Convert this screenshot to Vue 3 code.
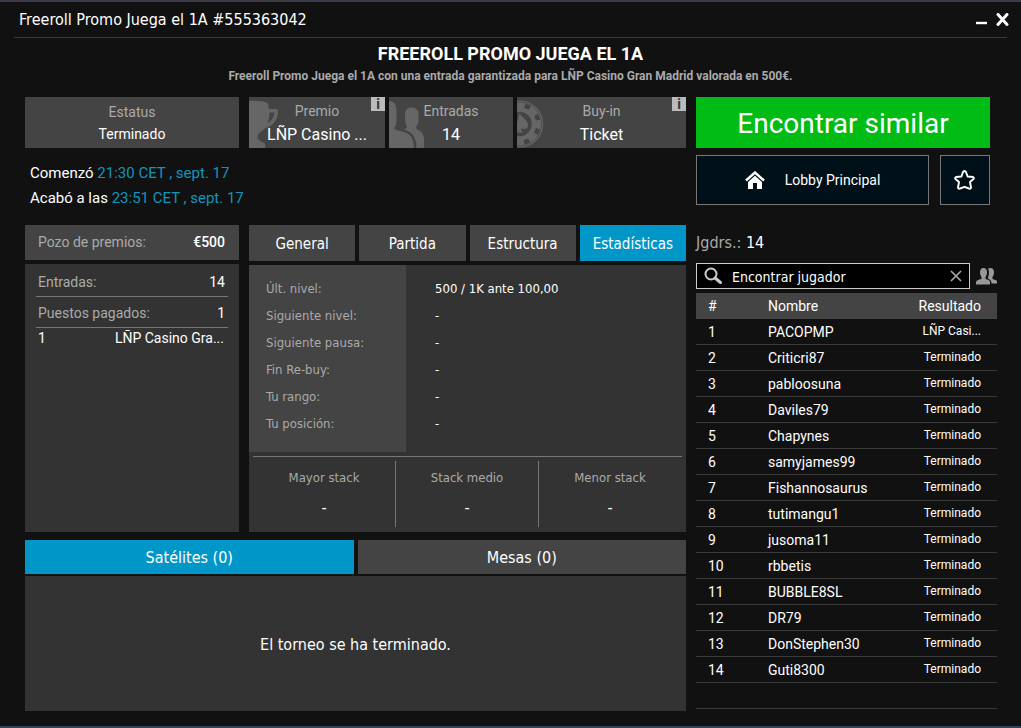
<script setup>
import { ref } from 'vue'

const tabs = ['General', 'Partida', 'Estructura', 'Estadísticas']
const activeTab = ref('Estadísticas')
const lowerTabs = ['Satélites (0)', 'Mesas (0)']
const activeLower = ref('Satélites (0)')
const search = ref('')

const levels = [
  ['Últ. nivel:', '500 / 1K ante 100,00'],
  ['Siguiente nivel:', '-'],
  ['Siguiente pausa:', '-'],
  ['Fin Re-buy:', '-'],
  ['Tu rango:', '-'],
  ['Tu posición:', '-'],
]
const stacks = ['Mayor stack', 'Stack medio', 'Menor stack']
const players = [
  'PACOPMP', 'Criticri87', 'pabloosuna', 'Daviles79', 'Chapynes', 'samyjames99', 'Fishannosaurus',
  'tutimangu1', 'jusoma11', 'rbbetis', 'BUBBLE8SL', 'DR79', 'DonStephen30', 'Guti8300',
].map((name, i) => ({ name, result: i === 0 ? 'LÑP Casi...' : 'Terminado' }))
</script>

<template>
  <div class="window">
    <header class="titlebar">
      <span class="title">Freeroll Promo Juega el 1A #555363042</span>
      <div class="controls">
        <button type="button" aria-label="Minimizar">
          <svg width="12" height="14" viewBox="0 0 12 14"><path d="M0 10h11" stroke="#fff" stroke-width="2.400" /></svg>
        </button>
        <button type="button" aria-label="Cerrar">
          <svg width="14" height="14" viewBox="0 0 14 14"><path d="M2 1.500l9 10M11 1.500L2 11.500" stroke="#fff" stroke-width="3" stroke-linecap="round" /></svg>
        </button>
      </div>
    </header>

    <div class="heading">
      <h1>FREEROLL PROMO JUEGA EL 1A</h1>
      <p>Freeroll Promo Juega el 1A con una entrada garantizada para LÑP Casino Gran Madrid valorada en 500€.</p>
    </div>

    <main class="body">
      <div class="left">
        <div class="split">
          <div class="tile status">
            <span class="label">Estatus</span>
            <span class="value">Terminado</span>
          </div>
          <div class="tiles">
            <div class="tile prize">
              <svg class="art" width="32" height="51" viewBox="0 0 32 51" fill="#666">
                <path d="M0 4C8 3.500 15 4 19 6.500L20 12H27.500Q29.500 12.500 29 16C28 23 24 29 17 31C14 33 9 36 8.500 39C8 42 10 44 15 46Q17 47 16 49V51H0ZM20.500 15.500C20.500 19 20 22 18.500 26C22 24.500 25 20.500 25.500 15.500Z" fill-rule="evenodd" />
              </svg>
              <span class="label">Premio</span>
              <span class="value">LÑP Casino ...</span>
              <button type="button" class="info" aria-label="Información del premio">i</button>
            </div>
            <div class="tile entries">
              <svg class="art" width="36" height="51" viewBox="0 0 36 51" fill="#666">
                <path d="M0 4Q4 4 6 7Q7.500 10 7.500 16V24Q7.500 29 5 31Q6 33 11 34Q18 35 21.500 39Q25 43 25 51H0Z" />
                <path d="M22.500 10.500C27 10.500 29.500 13 29.500 18V23Q29.500 28 27 30Q27 32 29 33Q34 35 35 41V51H27.500Q27.500 42 23 37Q20 33.500 14.500 32.500Q18 31.500 18 29.500Q16 27 16 23V18C16 13 18 10.500 22.500 10.500Z" />
              </svg>
              <span class="label">Entradas</span>
              <span class="value">14</span>
            </div>
            <div class="tile buyin">
              <svg class="art" width="28" height="51" viewBox="0 0 28 51" fill="none">
                <circle cx="2.500" cy="27" r="23" stroke="#666" stroke-width="1.200" />
                <circle cx="2.500" cy="27" r="17" stroke="#666" stroke-width="9.500" />
                <circle cx="2.500" cy="27" r="19" stroke="#444" stroke-width="4.500" stroke-dasharray="5.500 9.422" stroke-dashoffset="-4.700" />
                <path d="M2.500 16C4 20 11 23 11 28Q11 32 7 32Q5 32 4 30.500Q4 34 6 35.500H-1V30Z" fill="#666" />
              </svg>
              <span class="label">Buy-in</span>
              <span class="value">Ticket</span>
              <button type="button" class="info" aria-label="Información del buy-in">i</button>
            </div>
          </div>
        </div>

        <div class="dates">
          <p>Comenzó <time>21:30 CET , sept. 17</time></p>
          <p>Acabó a las <time>23:51 CET , sept. 17</time></p>
        </div>

        <div class="split details">
          <section class="pool">
            <div class="pool-head"><span>Pozo de premios:</span><b>€500</b></div>
            <div class="pool-body">
              <div class="line"><span>Entradas:</span><b>14</b></div>
              <div class="line"><span>Puestos pagados:</span><b>1</b></div>
              <div class="payout"><b>1</b><b>LÑP Casino Gra...</b></div>
            </div>
          </section>

          <section class="stats">
            <nav class="tabs">
              <button v-for="t in tabs" :key="t" type="button" :class="{ active: t === activeTab }" @click="activeTab = t">{{ t }}</button>
            </nav>
            <div class="panel">
              <table class="levels">
                <tbody>
                  <tr v-for="[k, v] in levels" :key="k"><th scope="row">{{ k }}</th><td>{{ v }}</td></tr>
                </tbody>
              </table>
              <dl class="stacks">
                <div v-for="s in stacks" :key="s"><dt>{{ s }}</dt><dd>-</dd></div>
              </dl>
            </div>
          </section>
        </div>

        <section class="lower">
          <nav class="tabs">
            <button v-for="t in lowerTabs" :key="t" type="button" :class="{ active: t === activeLower }" @click="activeLower = t">{{ t }}</button>
          </nav>
          <div class="message">El torneo se ha terminado.</div>
        </section>
      </div>

      <aside class="right">
        <button type="button" class="similar">Encontrar similar</button>
        <div class="actions">
          <button type="button" class="lobby">
            <svg width="20" height="18" viewBox="0 0 20 18">
              <path d="M1 9.500L10 1.500L19 9.500" fill="none" stroke="#fff" stroke-width="2.400" />
              <path d="M10 4.800L17 11V18H12V12H8V18H3V11Z" fill="#fff" />
            </svg>
            <span>Lobby Principal</span>
          </button>
          <button type="button" class="fav" aria-label="Favorito">
            <svg width="22" height="22" viewBox="0 0 22 22">
              <path d="M10.500 2Q11.500 2 12 3L13.600 7.500L19 8Q20.500 9 19.500 10L16 13L17 18.500Q16.500 20.500 15 19.500L10.500 17.800L6 19.500Q4.500 20.500 4 18.500L5 13L1.500 10Q.5 9 2 8L7.400 7.500L9 3Q9.500 2 10.500 2Z" fill="none" stroke="#fff" stroke-width="1.900" stroke-linejoin="round" />
            </svg>
          </button>
        </div>

        <p class="count">Jgdrs.: <b>14</b></p>

        <div class="search-row">
          <div class="search">
            <svg width="20" height="18" viewBox="0 0 20 18" fill="none">
              <circle cx="7" cy="7" r="5.500" stroke="#ccc" stroke-width="2" />
              <path d="M11 11L16.500 15.500" stroke="#ccc" stroke-width="3" stroke-linecap="round" />
            </svg>
            <input v-model="search" type="text" aria-label="Encontrar jugador" placeholder="Encontrar jugador">
            <button type="button" aria-label="Borrar" @click="search = ''">
              <svg width="12" height="12" viewBox="0 0 12 12"><path d="M1 1l10 10M11 1L1 11" stroke="#aaa" stroke-width="1.600" /></svg>
            </button>
          </div>
          <button type="button" class="friends" aria-label="Amigos">
            <svg width="21" height="17" viewBox="0 0 21 17" fill="#999">
              <path d="M7.500 0Q11 0 11 4.500Q11 7.500 9.500 9V11Q14 12 14 14V16.500H0V14Q.5 12 5.500 11V9Q4 7.500 4 4.500Q4 0 7.500 0Z" />
              <path d="M12 .8Q13 0 14.500 0Q18 0 18 4.500Q18 7.500 16.500 9V11Q20 12 21 13V15.500H15.500Q15.500 12 12 10.500V9.500Q13 7.500 13 4.500Q13 2.500 12 .8Z" />
            </svg>
          </button>
        </div>

        <table class="players">
          <thead>
            <tr><th scope="col">#</th><th scope="col">Nombre</th><th scope="col">Resultado</th></tr>
          </thead>
          <tbody>
            <tr v-for="(p, i) in players" :key="p.name"><td>{{ i + 1 }}</td><td>{{ p.name }}</td><td>{{ p.result }}</td></tr>
            <tr><td></td><td></td><td></td></tr>
          </tbody>
        </table>
      </aside>
    </main>
  </div>
</template>

<style>
body {
  background: #111;
}
</style>

<style scoped>
* {
  box-sizing: border-box;
}
.window {
  min-height: 100vh;
  display: flex;
  flex-direction: column;
  border-top: 2px solid #3a3a48;
  border-bottom: 2px solid #35405a;
  background: #111;
  color: #fff;
  font: 14px/20px Roboto, sans-serif;
}
h1, p, dl, dd {
  margin: 0;
}
b {
  font-weight: 400;
}
button {
  margin: 0;
  padding: 0;
  border: 0;
  background: none;
  color: inherit;
  font: inherit;
  cursor: pointer;
}
svg {
  display: block;
}
.titlebar {
  display: flex;
  justify-content: space-between;
  align-items: center;
  height: 36px;
  margin: 0 14px;
  padding-left: 5px;
  border-bottom: 1px solid #3a3a3a;
}
.title {
  font: 16px/20px "DejaVu Sans Condensed", "DejaVu Sans", sans-serif;
}
.controls {
  display: flex;
  gap: 8px;
  margin-right: -3px;
}
.heading {
  height: 59px;
  padding-top: 5px;
  text-align: center;
}
.heading h1 {
  font-size: 18px;
  line-height: 22px;
  font-weight: 700;
}
.heading p {
  font-size: 12px;
  line-height: 22px;
  font-weight: 700;
  color: #aaa;
}
.body {
  display: grid;
  grid-template-columns: minmax(0, 1fr) 301px;
  gap: 10px;
  padding: 0 24px 15px 25px;
}
.split {
  display: grid;
  grid-template-columns: 214px minmax(0, 1fr);
  gap: 10px;
}
.tiles {
  display: grid;
  grid-template-columns: 136fr 124fr 169fr;
  gap: 4px;
}
.tile {
  position: relative;
  display: flex;
  flex-direction: column;
  align-items: center;
  height: 51px;
  padding-top: 2px;
  background: #444;
}
.tile.status {
  padding-top: 4px;
}
.tile span {
  position: relative;
  line-height: 24px;
}
.tile.status span {
  line-height: 22px;
}
.label {
  color: #aaa;
}
.value {
  font-size: 16px;
}
.status .value {
  font-size: 14px;
}
.art {
  position: absolute;
  left: 0;
  top: 0;
}
.info {
  position: absolute;
  top: 0;
  right: 0;
  width: 14px;
  height: 14px;
  background: #bbb;
  color: #333;
  font-size: 14px;
  line-height: 14px;
  font-weight: 700;
}
.dates {
  padding: 13px 5px 14px;
  font-size: 15px;
  line-height: 25px;
}
.dates time {
  color: #1295bd;
}
.pool {
  display: flex;
  flex-direction: column;
  gap: 4px;
}
.pool span {
  color: #aaa;
}
.pool-head {
  display: flex;
  justify-content: space-between;
  padding: 0 14px 0 13px;
  line-height: 35px;
  background: #444;
}
.pool-head b {
  font-weight: 500;
}
.pool-body {
  flex: 1;
  padding: 2px 11px;
  background: #333;
}
.line, .payout {
  display: flex;
  justify-content: space-between;
  padding: 0 3px 0 2px;
}
.line {
  padding-top: 2px;
  line-height: 28px;
  border-bottom: 1px solid #777;
}
.payout {
  padding-right: 4px;
  line-height: 20px;
}
.tabs {
  display: grid;
  grid-auto-flow: column;
  grid-auto-columns: minmax(0, 1fr);
  gap: 4px;
}
.tabs button {
  padding-top: 2px;
  background: #444;
  font: 15px/34px "DejaVu Sans Condensed", "DejaVu Sans", sans-serif;
}
.tabs .active {
  background: #0097c8;
}
.panel {
  margin-top: 4px;
  background: #333;
  font: 13px/27px "DejaVu Sans Condensed", "DejaVu Sans", sans-serif;
}
.levels {
  width: 100%;
  border-collapse: collapse;
}
.levels th {
  width: 157px;
  padding: 0 0 0 17px;
  background: #444;
  color: #aaa;
  font-weight: 400;
  text-align: left;
}
.levels td {
  padding: 0 0 0 29px;
}
.levels tr:first-child > * {
  padding-top: 10px;
}
.levels tr:last-child > * {
  padding-bottom: 15px;
}
.stacks {
  display: grid;
  grid-template-columns: repeat(3, minmax(0, 1fr));
  margin: 4px 4px 0;
  padding: 4px 0 5px;
  border-top: 1px solid #777;
  text-align: center;
}
.stacks div {
  height: 66px;
  padding-top: 3px;
  border-right: 1px solid #777;
}
.stacks div:last-child {
  border-right-color: transparent;
}
.stacks dt {
  color: #aaa;
}
.stacks dd {
  font-size: 16px;
  line-height: 34px;
}
.lower {
  margin-top: 8px;
}
.lower .tabs button {
  font-size: 16px;
  line-height: 32px;
}
.message {
  margin-top: 2px;
  padding-top: 2px;
  background: #333;
  text-align: center;
  font: 16px/133px "DejaVu Sans Condensed", "DejaVu Sans", sans-serif;
}
.similar {
  display: block;
  width: calc(100% - 7px);
  padding-top: 2px;
  background: #00bc14;
  font-size: 28px;
  line-height: 49px;
}
.actions {
  display: flex;
  gap: 11px;
  margin: 7px 7px 0 0;
}
.actions button {
  display: flex;
  align-items: center;
  justify-content: center;
  height: 50px;
  border: 1px solid #777;
  background: #001018;
}
.lobby {
  flex: 1;
  gap: 20px;
}
.fav {
  width: 50px;
}
.count {
  margin-top: 28px;
  font: 16px/20px "DejaVu Sans Condensed", "DejaVu Sans", sans-serif;
  color: #aaa;
}
.count b {
  color: #fff;
}
.search-row {
  display: flex;
  align-items: center;
  gap: 6px;
  margin-top: 10px;
}
.search {
  flex: 1;
  display: flex;
  align-items: center;
  height: 26px;
  padding: 0 7px;
  border: 1px solid #ccc;
  background: #000;
}
.search input {
  flex: 1;
  min-width: 0;
  padding: 2px 8px 0;
  border: 0;
  outline: 0;
  background: none;
  color: #fff;
  font: 14px/20px "DejaVu Sans Condensed", "DejaVu Sans", sans-serif;
}
.search input::placeholder {
  color: #fff;
  opacity: 1;
}
.players {
  width: 100%;
  margin-top: 4px;
  border-collapse: separate;
  border-spacing: 0;
  table-layout: fixed;
}
.players th, .players td {
  height: 26px;
  padding: 0;
  font-weight: 400;
  line-height: 25px;
  text-align: left;
}
.players th {
  background: #444;
}
.players td {
  padding-top: 2px;
  line-height: 23px;
  border-bottom: 1px solid #3a3a3a;
}
.players tr > :first-child {
  width: 72px;
  padding-left: 12px;
}
.players tr > :last-child {
  width: 100px;
  padding-right: 16px;
  text-align: right;
}
.players td:last-child {
  padding-top: 0;
  font-size: 12px;
  line-height: 25px;
}
</style>
